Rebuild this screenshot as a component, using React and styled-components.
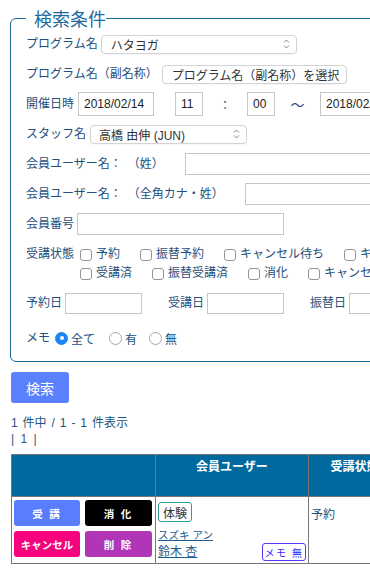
import React from "react";
import styled, { createGlobalStyle } from "styled-components";

const NAVY = "#234f7d";

const Global = createGlobalStyle`
  html, body { margin: 0; padding: 0; overflow: hidden; background: #fff; }
  body {
    font-family: "Liberation Sans", "Noto Sans CJK JP", sans-serif;
    font-size: 12px;
    color: ${NAVY};
  }
  * { box-sizing: border-box; }
`;

const Page = styled.div`
  width: 900px;
  padding: 7px 0 20px 11px;
`;

const Fieldset = styled.fieldset`
  margin: 0 0 0 -1px;
  width: 640px;
  border: 1px solid #1d6a9b;
  border-radius: 6px;
  padding: 0 0 8px 15px;
  min-inline-size: 0;
`;

const Legend = styled.legend`
  font-size: 18px;
  line-height: 22px;
  color: #1b6a9d;
  padding: 0 0 0 8px;
  font-family: "Noto Sans CJK JP", sans-serif;
`;

const Row = styled.div`
  display: flex;
  align-items: center;
  height: ${(p) => p.$h || 30}px;
  margin-top: ${(p) => p.$mt || 0}px;
  white-space: nowrap;
`;

const Label = styled.span`
  font-size: 12px;
  line-height: 16px;
  color: ${NAVY};
  margin-left: ${(p) => p.$ml || 0}px;
  white-space: nowrap;
`;

const SelectBox = styled.div`
  display: flex;
  align-items: center;
  justify-content: space-between;
  flex: none;
  width: ${(p) => p.$w}px;
  height: 19px;
  margin-left: ${(p) => p.$ml || 0}px;
  padding: 0 6px 0 ${(p) => p.$pl || 9}px;
  border: 1px solid #d3d3d3;
  border-radius: 4px;
  background: #fff;
  font-size: 12px;
  color: #333;
  box-shadow: 0 1px 1px rgba(0, 0, 0, 0.04);
`;

const TextInput = styled.input`
  flex: none;
  width: ${(p) => p.$w}px;
  height: ${(p) => p.$h || 22}px;
  margin: 0 0 0 ${(p) => p.$ml || 0}px;
  padding: 0 0 0 5px;
  border: 1px solid #c6c6c6;
  border-radius: 0;
  font-family: "Liberation Sans", sans-serif;
  font-size: 12px;
  color: #222;
  background: #fff;
  outline: none;
`;

const Sep = styled.span`
  flex: none;
  width: ${(p) => p.$w}px;
  text-align: center;
  font-size: ${(p) => p.$fs || 12}px;
  color: ${NAVY};
`;

const StatusRow = styled.div`
  display: flex;
  align-items: flex-start;
  margin-top: 6px;
  white-space: nowrap;
`;

const StatusLabel = styled.span`
  line-height: 19px;
  margin-right: 6px;
`;

const Lines = styled.div`
  display: flex;
  flex-direction: column;
`;

const Line = styled.div`
  display: flex;
  align-items: center;
  height: 19px;
`;

const CheckItem = styled.label`
  display: flex;
  align-items: center;
  margin-right: 20px;
  line-height: 19px;
`;

const Box = styled.span`
  width: 12px;
  height: 12px;
  border: 1px solid #959595;
  border-radius: 3px;
  background: #fff;
  margin-right: 4px;
  flex: none;
`;

const RadioItem = styled.label`
  display: flex;
  align-items: center;
  margin-right: ${(p) => p.$mr || 12}px;
`;

const Radio = styled.span`
  width: 13px;
  height: 13px;
  border-radius: 50%;
  flex: none;
  margin-right: 3px;
  margin-left: ${(p) => p.$ml || 0}px;
  background: ${(p) => (p.$on ? "#1b86f5" : "#fff")};
  border: 1px solid ${(p) => (p.$on ? "#1b86f5" : "#a8a8a8")};
  display: flex;
  align-items: center;
  justify-content: center;
  &::after {
    content: "";
    display: ${(p) => (p.$on ? "block" : "none")};
    width: 4px;
    height: 4px;
    border-radius: 50%;
    background: #fff;
  }
`;

const SearchButton = styled.button`
  display: block;
  margin-top: 10px;
  width: 58px;
  height: 31px;
  border: none;
  border-radius: 3px;
  background: #5b80fd;
  color: #fff;
  font-family: "Noto Sans CJK JP", sans-serif;
  font-size: 14px;
  padding: 0;
`;

const Count = styled.div`
  margin-top: 12px;
  line-height: 16px;
  font-size: 12px;
  word-spacing: 1.6px;
  color: #1f5585;
`;

const Pager = styled.div`
  line-height: 16px;
  font-size: 12px;
  word-spacing: 3px;
  color: #3d4f7c;
`;

const Table = styled.table`
  margin-top: 7px;
  border-collapse: collapse;
  table-layout: fixed;
  width: 600px;
`;

const Th = styled.th`
  width: ${(p) => p.$w}px;
  height: 42px;
  background: #00699d;
  color: #fff;
  font-size: 12px;
  font-weight: bold;
  line-height: 16px;
  vertical-align: top;
  padding: 4px 0 0;
  border: 1px solid #777;
  text-align: center;
`;

const Td = styled.td`
  border: 1px solid #777;
  vertical-align: top;
  padding: ${(p) => p.$pad || "3px 3px 4px 2px"};
  height: 66px;
`;

const ActionGrid = styled.div`
  display: grid;
  grid-template-columns: 66px 67px;
  grid-auto-rows: 26px;
  column-gap: 5px;
  row-gap: 5px;
`;

const ActionButton = styled.button`
  border: none;
  border-radius: 3px;
  background: ${(p) => p.$bg};
  color: #fff;
  font-family: "Noto Sans CJK JP", sans-serif;
  font-size: 10.5px;
  font-weight: bold;
  letter-spacing: ${(p) => (p.$spaced ? "2px" : "0")};
  padding: 0;
`;

const Tag = styled.span`
  display: inline-flex;
  align-items: center;
  height: 20px;
  padding: 0 4px;
  margin-top: 2px;
  border: 1px solid #2aa198;
  border-radius: 3px;
  font-size: 12px;
  color: #333;
`;

const Kana = styled.a`
  display: block;
  margin-top: 6px;
  font-size: 10.5px;
  line-height: 14px;
  color: #1d5c8e;
  text-decoration: underline;
`;

const NameLine = styled.div`
  display: flex;
  justify-content: space-between;
  align-items: flex-end;
  margin-top: 1px;
`;

const Name = styled.a`
  font-size: 12px;
  line-height: 16px;
  color: #1d5c8e;
  text-decoration: underline;
  margin-bottom: 1px;
`;

const MemoButton = styled.span`
  display: inline-flex;
  align-items: center;
  justify-content: center;
  width: 44px;
  height: 18px;
  border: 1px solid #5038ff;
  border-radius: 3px;
  color: #3a28ff;
  font-size: 10px;
  letter-spacing: 1.5px;
`;

const Status = styled.span`
  display: block;
  margin-top: 7px;
  line-height: 16px;
  font-size: 12px;
  color: ${NAVY};
`;

const Chevron = () => (
  <svg width="7" height="10" viewBox="0 0 7 10" fill="none" stroke="#888" strokeWidth="1">
    <polyline points="1,3.5 3.5,1 6,3.5" />
    <polyline points="1,6.5 3.5,9 6,6.5" />
  </svg>
);

const Select = ({ w, ml, pl, children }) => (
  <SelectBox $w={w} $ml={ml} $pl={pl}>
    <span>{children}</span>
    <Chevron />
  </SelectBox>
);

const Check = ({ children }) => (
  <CheckItem>
    <Box />
    {children}
  </CheckItem>
);

export default function App() {
  return (
    <>
      <Global />
      <Page>
        <Fieldset>
          <Legend>検索条件</Legend>
          <Row>
            <Label>プログラム名</Label>
            <Select w={196} ml={3} pl={9}>ハタヨガ</Select>
          </Row>
          <Row>
            <Label>プログラム名（副名称）</Label>
            <Select w={185} ml={4} pl={9}>プログラム名（副名称）を選択</Select>
          </Row>
          <Row>
            <Label>開催日時</Label>
            <TextInput $w={76} $h={24} $ml={4} defaultValue="2018/02/14" />
            <TextInput $w={28} $h={24} $ml={21} defaultValue="11" />
            <Sep $w={44}>：</Sep>
            <TextInput $w={28} $h={24} defaultValue="00" />
            <Sep $w={45} $fs={14}>〜</Sep>
            <TextInput $w={90} $h={24} defaultValue="2018/02/14" />
          </Row>
          <Row>
            <Label>スタッフ名</Label>
            <Select w={157} ml={4} pl={8}>高橋 由伸 (JUN)</Select>
          </Row>
          <Row>
            <Label>会員ユーザー名：　（姓）</Label>
            <TextInput $w={300} $ml={21} />
          </Row>
          <Row>
            <Label>会員ユーザー名：　（全角カナ・姓）</Label>
            <TextInput $w={300} $ml={21} />
          </Row>
          <Row>
            <Label>会員番号</Label>
            <TextInput $w={207} $ml={3} />
          </Row>
          <StatusRow>
            <StatusLabel>受講状態</StatusLabel>
            <Lines>
              <Line>
                <Check>予約</Check>
                <Check>振替予約</Check>
                <Check>キャンセル待ち</Check>
                <Check>キャンセル</Check>
              </Line>
              <Line>
                <Check>受講済</Check>
                <Check>振替受講済</Check>
                <Check>消化</Check>
                <Check>キャンセル済</Check>
              </Line>
            </Lines>
          </StatusRow>
          <Row $mt={5}>
            <Label>予約日</Label>
            <TextInput $w={77} $h={21} $ml={3} />
            <Label $ml={26}>受講日</Label>
            <TextInput $w={77} $h={21} $ml={3} />
            <Label $ml={26}>振替日</Label>
            <TextInput $w={77} $h={21} $ml={3} />
          </Row>
          <Row $mt={5}>
            <Label>メモ</Label>
            <RadioItem $mr={14}>
              <Radio $on $ml={5} />
              全て
            </RadioItem>
            <RadioItem $mr={12}>
              <Radio />
              有
            </RadioItem>
            <RadioItem>
              <Radio />
              無
            </RadioItem>
          </Row>
        </Fieldset>

        <SearchButton>検索</SearchButton>
        <Count>1 件中 / 1 - 1 件表示</Count>
        <Pager>| 1 |</Pager>

        <Table>
          <thead>
            <tr>
              <Th $w={144} />
              <Th $w={153}>会員ユーザー</Th>
              <Th $w={92}>受講状態</Th>
              <Th $w={211}>備考</Th>
            </tr>
          </thead>
          <tbody>
            <tr>
              <Td>
                <ActionGrid>
                  <ActionButton $bg="#5a7dff" $spaced>受 講</ActionButton>
                  <ActionButton $bg="#000" $spaced>消 化</ActionButton>
                  <ActionButton $bg="#f5047e">キャンセル</ActionButton>
                  <ActionButton $bg="#b035b7" $spaced>削 除</ActionButton>
                </ActionGrid>
              </Td>
              <Td $pad="3px 2px 2px 2px">
                <Tag>体験</Tag>
                <Kana>スズキ アン</Kana>
                <NameLine>
                  <Name>鈴木 杏</Name>
                  <MemoButton>メモ 無</MemoButton>
                </NameLine>
              </Td>
              <Td $pad="3px 3px 3px 2px">
                <Status>予約</Status>
              </Td>
              <Td />
            </tr>
          </tbody>
        </Table>
      </Page>
    </>
  );
}
